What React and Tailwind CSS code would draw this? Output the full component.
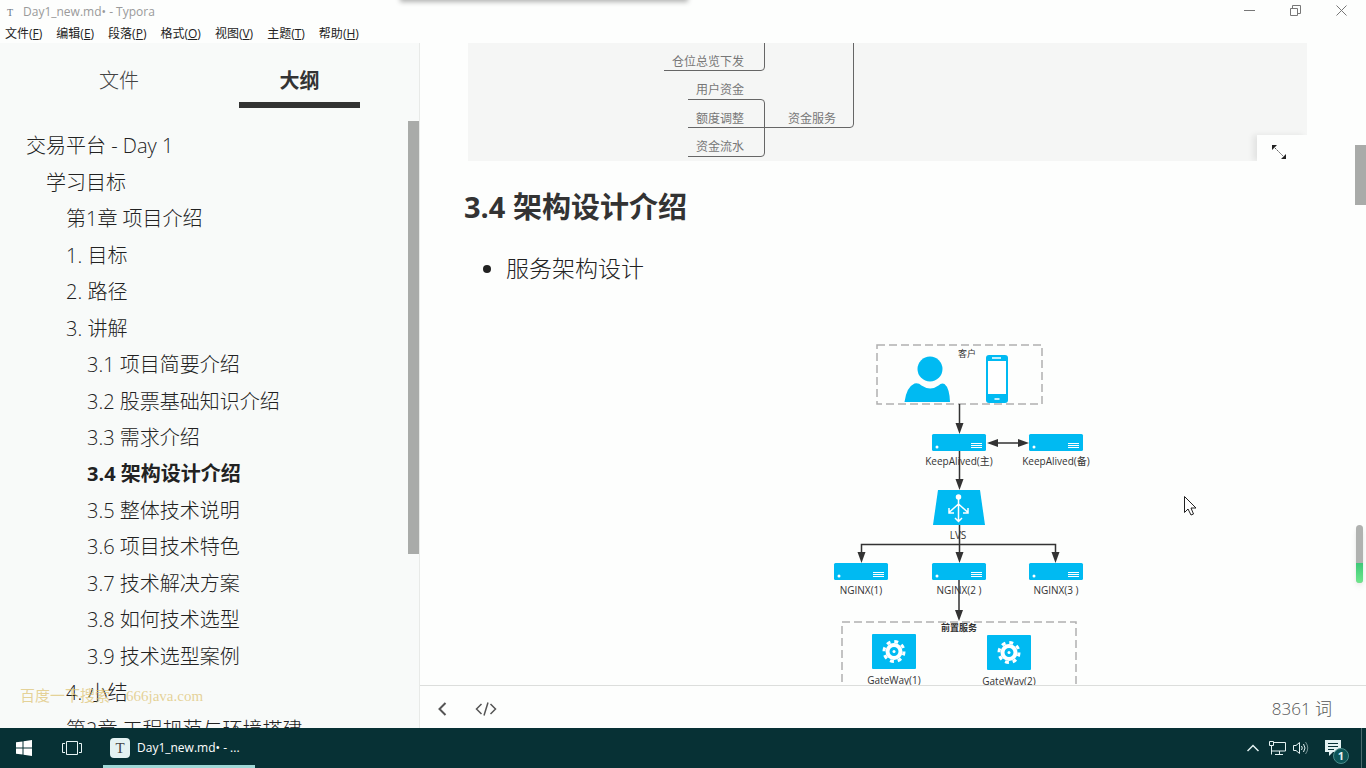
import React, { useState } from "react";

const menus = [
  ["文件", "F"],
  ["编辑", "E"],
  ["段落", "P"],
  ["格式", "O"],
  ["视图", "V"],
  ["主题", "T"],
  ["帮助", "H"],
];

const outline = [
  { level: 1, text: "交易平台 - Day 1" },
  { level: 2, text: "学习目标" },
  { level: 3, text: "第1章 项目介绍" },
  { level: 3, text: "1. 目标" },
  { level: 3, text: "2. 路径" },
  { level: 3, text: "3. 讲解" },
  { level: 4, text: "3.1 项目简要介绍" },
  { level: 4, text: "3.2 股票基础知识介绍" },
  { level: 4, text: "3.3 需求介绍" },
  { level: 4, text: "3.4 架构设计介绍" },
  { level: 4, text: "3.5 整体技术说明" },
  { level: 4, text: "3.6 项目技术特色" },
  { level: 4, text: "3.7 技术解决方案" },
  { level: 4, text: "3.8 如何技术选型" },
  { level: 4, text: "3.9 技术选型案例" },
  { level: 3, text: "4. 小结" },
  { level: 3, text: "第2章 工程规范与环境搭建" },
];

const indent = {
  1: "pl-[26px]",
  2: "pl-[46px]",
  3: "pl-[66px]",
  4: "pl-[87px]",
};

const TitleBar = () => (
  <header className="flex h-6 shrink-0 items-center pr-[2px]">
    <span className="w-[23px] pl-[7px] font-['Liberation_Serif',serif] text-[10px] text-gray-500">
      T
    </span>
    <h1 className="text-[12px] text-[#9a9a9a]">Day1_new.md• - Typora</h1>
    <div className="ml-auto flex self-start text-[#777]">
      <button aria-label="最小化" className="flex h-5 w-[46px] items-center justify-center">
        <svg width="11" height="11" viewBox="0 0 11 11" stroke="currentColor" fill="none">
          <path d="M0 5.5h11" />
        </svg>
      </button>
      <button aria-label="还原" className="flex h-5 w-[46px] items-center justify-center">
        <svg width="11" height="11" viewBox="0 0 11 11" stroke="currentColor" fill="none">
          <path d="M.5 3.5h7v7h-7zM2.500 3.500v-3h8v8h-3" />
        </svg>
      </button>
      <button aria-label="关闭" className="flex h-5 w-[46px] items-center justify-center">
        <svg width="11" height="11" viewBox="0 0 11 11" stroke="currentColor" fill="none">
          <path d="M.5.5l10 10M10.500.5l-10 10" />
        </svg>
      </button>
    </div>
  </header>
);

const MenuBar = () => (
  <nav className="flex h-[19px] shrink-0 items-center gap-[14px] pl-[5px] text-[12px] text-[#222]">
    {menus.map(([name, key]) => (
      <button key={key} className="whitespace-nowrap">
        {name}(<u>{key}</u>)
      </button>
    ))}
  </nav>
);

const Sidebar = () => {
  const [active, setActive] = useState("3.4 架构设计介绍");

  return (
    <aside className="relative flex w-[420px] shrink-0 flex-col overflow-hidden border-r border-[#e8eae8] bg-[#f8faf9] text-[20px] text-[#222]">
      <div className="flex h-[65px] shrink-0">
        <button className="ml-[59px] w-[120px] border-b-[6px] border-transparent pt-[17px] font-light text-[#444]">
          文件
        </button>
        <button className="ml-[60px] w-[121px] border-b-[6px] border-[#333] pt-[17px] font-bold text-[#333]">
          大纲
        </button>
      </div>
      <ul className="mt-5 grid h-[620px] shrink-0 auto-rows-fr">
        {outline.map((item) => (
          <li key={item.text} className={`flex items-center ${indent[item.level]}`}>
            <a
              href="#section"
              onClick={() => setActive(item.text)}
              className={`whitespace-nowrap ${active === item.text ? "font-bold" : "font-light"}`}
            >
              {item.text}
            </a>
          </li>
        ))}
      </ul>
      <div className="absolute right-0 top-[78px] h-[433px] w-[11px] bg-[#a9aba9]" />
      <p className="absolute left-[20px] top-[642px] flex gap-4 whitespace-nowrap font-['Liberation_Serif','Noto_Sans_CJK_SC',serif] text-[15px] text-[#dcc06c]/70">
        <span>百度一下搜索</span>
        <span>666java.com</span>
      </p>
    </aside>
  );
};

// tail of the service mind map
const MindMap = () => (
  <div className="relative mx-1 h-[118px] overflow-hidden bg-[#f5f6f5]">
    <svg width="400" height="118" viewBox="468 43 400 118" fill="none" stroke="#666">
      <path d="M664 70.500h97q3.500 0 3.500-3.500V43M688 99.500h73q3.500 0 3.500 3.500v50q0 3.500-3.500 3.500h-73M688 127.500h162q3.500 0 3.500-3.500V43" />
      <g fill="#777" stroke="none" fontSize="12">
        <text x="672" y="66">仓位总览下发</text>
        <text x="696" y="94">用户资金</text>
        <text x="696" y="123">额度调整</text>
        <text x="696" y="151">资金流水</text>
        <text x="788" y="123">资金服务</text>
      </g>
    </svg>
    <button
      aria-label="展开"
      className="absolute bottom-0 right-0 flex h-[26px] w-[50px] items-center bg-[#fdfefd] pl-[14px] pt-2 shadow-[-4px_0_6px_rgba(0,0,0,0.08)]"
    >
      <svg width="16" height="16" viewBox="0 0 16 16" fill="#222">
        <path d="M4 4l8 8" stroke="#555" strokeDasharray="2 1" />
        <path d="M1 1h5L1 6zM15 15h-5l5-5z" />
      </svg>
    </button>
  </div>
);

const Server = ({ x, y, label }) => (
  <g>
    <rect x={x} y={y} width="54" height="17" rx="1.500" fill="#00baf2" />
    <circle cx={x + 5} cy={y + 13} r="1.500" fill="#fff" />
    <path
      d={`M${x + 39} ${y + 9.5}h11M${x + 39} ${y + 11.5}h11M${x + 39} ${y + 13.5}h11`}
      stroke="#fff"
    />
    <text x={x + 27} y={y + 31} textAnchor="middle">
      {label}
    </text>
  </g>
);

const Gateway = ({ x, y, label }) => (
  <g>
    <rect x={x} y={y} width="44" height="35" rx="1" fill="#00baf2" />
    <circle cx={x + 22} cy={y + 17.5} r="6.500" fill="none" stroke="#fff" strokeWidth="4" />
    <circle
      cx={x + 22}
      cy={y + 17.5}
      r="10"
      fill="none"
      stroke="#fff"
      strokeWidth="3"
      strokeDasharray="3.930 3.924"
    />
    <circle cx={x + 22} cy={y + 17.5} r="1.500" fill="#fff" />
    <text x={x + 22} y={y + 50} textAnchor="middle">
      {label}
    </text>
  </g>
);

const Architecture = () => (
  <svg
    className="ml-[366px] shrink-0"
    width="270"
    height="360"
    viewBox="830 340 270 360"
    fontSize="10"
    fill="#333"
  >
    <g fill="none" stroke="#b0b0b0" strokeWidth="1.500" strokeDasharray="8 4">
      <rect x="877" y="345" width="165" height="59" />
      <rect x="842" y="622" width="234" height="90" />
    </g>
    <text x="967" y="357" textAnchor="middle" fontSize="9">客户</text>
    <g fill="#00baf2">
      <circle cx="930" cy="369" r="12.500" />
      <path d="M904.500 402q2-15 10-18.500 4-1 7 2 9 6 17 0 3-3 6-1.500 5 4 5.500 18z" />
      <rect x="986" y="355" width="22" height="48" rx="3" />
      <rect x="988" y="361" width="18" height="33" fill="#fff" />
      <path d="M992 358h9M994.500 399h5" stroke="#fff" strokeWidth="1.500" />
    </g>

    <Server x={932} y={434} label="KeepAlived(主)" />
    <Server x={1029} y={434} label="KeepAlived(备)" />
    <path d="M938 490h42l5 35h-52z" fill="#00baf2" />
    <text x="958" y="539" textAnchor="middle">LVS</text>
    <Server x={834} y={563} label="NGINX(1)" />
    <Server x={932} y={563} label="NGINX(2 )" />
    <Server x={1029} y={563} label="NGINX(3 )" />
    <text x="959" y="631" textAnchor="middle" fontSize="9" fontWeight="bold">前置服务</text>
    <Gateway x={872} y={634} label="GateWay(1)" />
    <Gateway x={987} y={635} label="GateWay(2)" />

    <g fill="none" stroke="#333" strokeWidth="1.500">
      <path d="M959.500 404v22M959.500 451v32M959.500 525v32M861.500 557v-12.500h194V557M959 580v32M994 443h28" />
    </g>
    <path d="M959.500 434l-4-11h8zM959.500 490l-4-11h8zM959.500 563l-4-11h8zM861.500 563l-4-11h8zM1055.500 563l-4-11h8zM959 621l-4-11h8zM987 443l11-4v8zM1029 443l-11-4v8z" />
    <g fill="none" stroke="#fff" strokeWidth="1.500">
      <circle cx="958.500" cy="497" r="2" fill="#fff" />
      <path d="M958.500 498v23M958.500 504l-9 8M958.500 504l9 8M949 508v5h5M968 508v5h-5M955 518l3.500 3.500 3.500-3.500" />
    </g>
  </svg>
);

const Editor = () => (
  <main className="relative flex min-w-0 flex-1 flex-col">
    <article className="min-h-0 flex-1 overflow-hidden pl-11 pr-[55px] text-[#333]">
      <MindMap />
      <h3 className="mt-6 text-[29px] font-bold leading-[44px]">3.4 架构设计介绍</h3>
      <ul className="mt-5 list-disc pl-[42px] text-[23px] font-light leading-[38px] text-[#222]">
        <li>服务架构设计</li>
      </ul>
      <div className="mt-[53px]">
        <Architecture />
      </div>
    </article>
    <footer className="flex h-[43px] shrink-0 items-center border-t border-[#dcdedc] pl-[17px] pr-[34px] pt-[3px] text-[#555]">
      <button aria-label="返回">
        <svg width="10" height="16" viewBox="0 0 10 16" fill="none" stroke="#555" strokeWidth="2">
          <path d="M8.500 2L2.500 8l6 6" />
        </svg>
      </button>
      <button aria-label="源代码模式" className="ml-7">
        <svg width="22" height="16" viewBox="0 0 22 16" fill="none" stroke="#555" strokeWidth="1.500">
          <path d="M6.500 3L1.500 8l5 5M15.500 3l5 5-5 5M13 1.500L9 14.500" />
        </svg>
      </button>
      <span className="ml-auto text-[17px] font-light">8361 词</span>
    </footer>
    <div className="absolute right-0 top-[102px] h-[60px] w-[11px] bg-[#a9aba9]" />
    <div className="absolute right-[3px] top-[482px] h-[58px] w-[7px] overflow-hidden rounded-full bg-[#b0b2b0] shadow-md">
      <div className="mt-[38px] h-5 bg-gradient-to-b from-[#3cc878] to-[#6ee88c]" />
    </div>
    <svg
      className="absolute left-[764px] top-[453px]"
      width="13"
      height="20"
      viewBox="0 0 13 20"
      fill="#fff"
      stroke="#222"
    >
      <path d="M.5.5v16l3.500-3.500 3 6 2.500-1-2.500-6h5z" />
    </svg>
  </main>
);

const Taskbar = () => (
  <footer className="flex h-10 shrink-0 items-center bg-[#073135] text-white">
    <button aria-label="开始" className="flex w-12 justify-center">
      <svg width="16" height="16" viewBox="0 0 16 16" fill="#fff">
        <path d="M0 2.300L6.500 1.400v6.100H0zM7.500 1.200L16 0v7.500H7.500zM0 8.500h6.500v6.100L0 13.700zM7.500 8.500H16V16l-8.500-1.200z" />
      </svg>
    </button>
    <button aria-label="任务视图" className="flex w-12 justify-center">
      <svg width="20" height="14" viewBox="0 0 20 14" fill="none" stroke="#e8f4f4">
        <path d="M4.500.5h11v13h-11zM3 2.500H.5v9H3M17 2.500h2.500v9H17" />
      </svg>
    </button>
    <button className="ml-[7px] flex h-10 w-[152px] items-center border-b-[3px] border-[#9fd8d6] pl-[7px] pt-[3px] text-[12px]">
      <span className="flex size-5 items-center justify-center rounded-sm bg-[#e4f2f2] font-['Liberation_Serif',serif] text-[15px] text-[#444]">
        T
      </span>
      <span className="ml-[7px]">Day1_new.md• - ...</span>
    </button>
    <div className="ml-auto flex items-center text-[#e4f2f2]">
      <button aria-label="显示隐藏的图标">
        <svg width="12" height="8" viewBox="0 0 12 8" fill="none" stroke="currentColor" strokeWidth="1.500">
          <path d="M.5 7L6 1.500 11.500 7" />
        </svg>
      </button>
      <button aria-label="网络" className="ml-[10px]">
        <svg width="17" height="14" viewBox="0 0 17 14" fill="none" stroke="currentColor">
          <path d="M5 1.500h11.500v8.500H3M.5.500h4v4h-4zM2.500 4.500v9M10.500 10v3M6 13.500h8" />
        </svg>
      </button>
      <button aria-label="音量" className="ml-[7px]">
        <svg width="17" height="14" viewBox="0 0 17 14" fill="none" stroke="currentColor">
          <path d="M.5 4.500h2.500L6.500 1.500v11L3 9.500H.5zM8.500 5q1.500 2 0 4M10.500 3q3 4 0 8" />
          <path d="M12.500 1q4.500 6 0 12" opacity=".5" />
        </svg>
      </button>
      <button aria-label="通知" className="relative ml-[15px]">
        <svg width="16" height="16" viewBox="0 0 16 16">
          <path d="M0 0h16v12H8l-4 4v-4H0z" fill="#e4f2f2" />
          <path d="M3 3.500h10M3 6.500h10M3 9.500h6" stroke="#073135" />
        </svg>
        <span className="absolute left-2 top-2 flex size-4 items-center justify-center rounded-full border border-[#4b8c8b] bg-[#0c5557] text-[11px] font-bold">
          1
        </span>
      </button>
      <div className="ml-[20px] h-10 w-[5px] border-l border-[#4b6c6e]" />
    </div>
  </footer>
);

const App = () => {
  return (
    <div className="relative flex h-screen flex-col overflow-hidden bg-[#fdfefd] font-['Open_Sans','Noto_Sans_CJK_SC',sans-serif]">
      <div className="absolute -top-2 left-[402px] h-2 w-[284px] shadow-[0_0_5px_2px_rgba(0,0,0,0.3)]" />
      <TitleBar />
      <MenuBar />
      <div className="flex min-h-0 flex-1">
        <Sidebar />
        <Editor />
      </div>
      <Taskbar />
    </div>
  );
};

export default App;
